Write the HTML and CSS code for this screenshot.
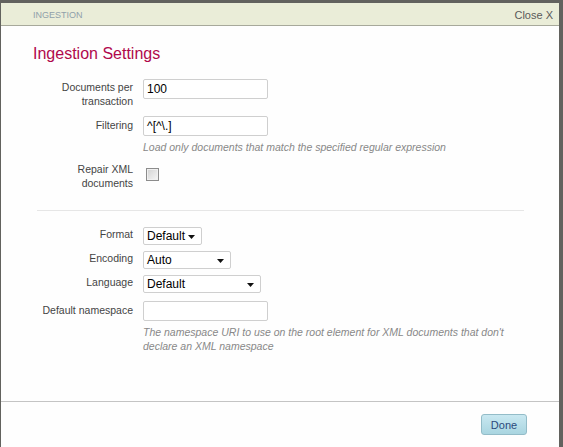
FILE: index.html
```html
<!DOCTYPE html>
<html>
<head>
<meta charset="utf-8">
<link rel="stylesheet" href="styles.css">
</head>
<body>
<div class="dialog">
  <div class="header">
    <span class="header-title">INGESTION</span>
    <span class="close">Close X</span>
  </div>
  <div class="content">
    <h1 class="title">Ingestion Settings</h1>
    <div class="row row-first">
      <div class="label">Documents per<br>transaction</div>
      <div class="field"><div class="input">100</div></div>
    </div>
    <div class="row row-filter">
      <div class="label label-one">Filtering</div>
      <div class="field"><div class="input">^[^\.]</div></div>
    </div>
    <div class="hint">Load only documents that match the specified regular expression</div>
    <div class="row row-repair">
      <div class="label">Repair XML<br>documents</div>
      <div class="field"><span class="checkbox"></span></div>
    </div>
    <div class="separator"></div>
    <div class="row row-select row-format">
      <div class="label label-sel">Format</div>
      <div class="field"><div class="select w-format"><span>Default</span><svg class="arrow" width="7" height="4" viewBox="0 0 7 4"><path d="M0 0H7L3.5 4Z" fill="#111"/></svg></div></div>
    </div>
    <div class="row row-select">
      <div class="label label-sel">Encoding</div>
      <div class="field"><div class="select w-encoding"><span>Auto</span><svg class="arrow" width="7" height="4" viewBox="0 0 7 4"><path d="M0 0H7L3.5 4Z" fill="#111"/></svg></div></div>
    </div>
    <div class="row row-select">
      <div class="label label-sel">Language</div>
      <div class="field"><div class="select w-language"><span>Default</span><svg class="arrow" width="7" height="4" viewBox="0 0 7 4"><path d="M0 0H7L3.5 4Z" fill="#111"/></svg></div></div>
    </div>
    <div class="row row-ns">
      <div class="label label-one">Default namespace</div>
      <div class="field"><div class="input"></div></div>
    </div>
    <div class="hint">The namespace URI to use on the root element for XML documents that don't<br>declare an XML namespace</div>
  </div>
  <div class="footer">
    <button class="done">Done</button>
  </div>
</div>
</body>
</html>
```

FILE: styles.css
```css
html, body {
  margin: 0;
  padding: 0;
}
body {
  background: #62625e;
  width: 563px;
  height: 447px;
  overflow: hidden;
  font-family: "Liberation Sans", Arial, sans-serif;
}
.dialog {
  margin: 3px 4px 0 1px;
  height: 444px;
  background: #fefefe;
  display: flex;
  flex-direction: column;
}
.header {
  height: 22px;
  background: #eaedd8;
  border-bottom: 1px solid #a7a99b;
  display: flex;
  align-items: center;
  justify-content: space-between;
  padding: 0 6px 0 32px;
}
.header-title {
  font-size: 9px;
  color: #8fa0aa;
  padding-top: 1px;
}
.close {
  font-size: 11px;
  color: #5a5a5a;
  padding-top: 1px;
}
.content {
  flex: 1;
}
.title {
  margin: 18px 0 0 32px;
  font-size: 16px;
  line-height: 20px;
  font-weight: normal;
  color: #b0084c;
}
.row {
  display: flex;
  align-items: flex-start;
}
.label {
  width: 132px;
  text-align: right;
  font-size: 10.5px;
  line-height: 14px;
  color: #444;
  flex-shrink: 0;
}
.label-one {
  padding-top: 2px;
}
.label-sel {
  padding-top: 0;
}
.field {
  margin-left: 10px;
}
.row-first { margin-top: 15px; }
.row-first .label { padding-top: 1px; }
.row-filter { margin-top: 8px; }
.row-repair { margin-top: 8px; }
.input {
  box-sizing: border-box;
  width: 125px;
  height: 20px;
  border: 1px solid #cfcfcf;
  border-radius: 2px;
  background: #fff;
  font-size: 12px;
  line-height: 18px;
  padding-left: 3px;
  color: #000;
}
.hint {
  margin: 4px 0 0 142px;
  font-size: 10.5px;
  line-height: 14px;
  font-style: italic;
  color: #888;
}
.checkbox {
  display: block;
  box-sizing: border-box;
  width: 13px;
  height: 13px;
  margin: 6px 0 0 3px;
  border: 1px solid #8c8c8c;
  background: linear-gradient(135deg, #d2d2d2, #f6f6f6);
  box-shadow: inset 0 0 0 1px #f0f0f0;
}
.separator {
  margin: 20px 0 0 36px;
  width: 487px;
  height: 1px;
  background: #e6e6e6;
}
.row-format { margin-top: 16px; }
.row-select + .row-select { margin-top: 6px; }
.select {
  box-sizing: border-box;
  height: 18px;
  border: 1px solid #cfcfcf;
  border-radius: 2px;
  background: #fff;
  display: flex;
  align-items: center;
  justify-content: space-between;
  padding: 0 6px 0 3px;
  font-size: 12px;
  color: #000;
}
.select .arrow { margin-top: 2px; }
.w-format { width: 59px; }
.w-encoding { width: 88px; }
.w-language { width: 118px; }
.row-ns { margin-top: 8px; }
.footer {
  height: 45px;
  border-top: 1px solid #c4c4c4;
  display: flex;
  justify-content: flex-end;
  align-items: flex-start;
  padding-right: 32px;
}
.done {
  margin-top: 12px;
  width: 46px;
  height: 21px;
  border: 1px solid #93bcc8;
  border-radius: 3px;
  background: linear-gradient(#c9e8f1, #a9d5e0);
  font-family: "Liberation Sans", Arial, sans-serif;
  font-size: 11px;
  color: #2b4a7c;
  padding: 0;
}
```
